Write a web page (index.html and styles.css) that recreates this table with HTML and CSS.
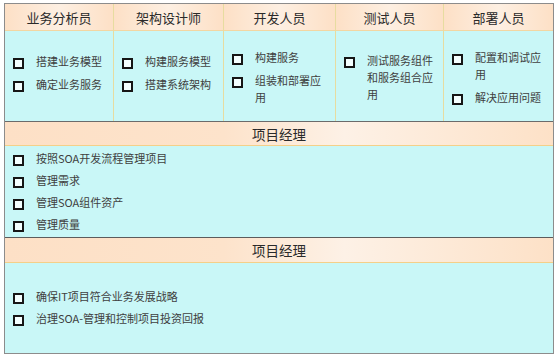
FILE: index.html
```html
<!DOCTYPE html>
<html lang="zh">
<head>
<meta charset="utf-8">
<link rel="stylesheet" href="styles.css">
</head>
<body>
<div class="frame">
  <div class="roles">
    <div class="col">
      <div class="col-head">业务分析员</div>
      <div class="col-body raised">
        <ul class="list">
          <li>搭建业务模型</li>
          <li>确定业务服务</li>
        </ul>
      </div>
    </div>
    <div class="col">
      <div class="col-head">架构设计师</div>
      <div class="col-body raised">
        <ul class="list">
          <li>构建服务模型</li>
          <li>搭建系统架构</li>
        </ul>
      </div>
    </div>
    <div class="col">
      <div class="col-head">开发人员</div>
      <div class="col-body">
        <ul class="list">
          <li>构建服务</li>
          <li>组装和部署应用</li>
        </ul>
      </div>
    </div>
    <div class="col">
      <div class="col-head">测试人员</div>
      <div class="col-body">
        <ul class="list">
          <li>测试服务组件和服务组合应用</li>
        </ul>
      </div>
    </div>
    <div class="col">
      <div class="col-head">部署人员</div>
      <div class="col-body">
        <ul class="list">
          <li>配置和调试应用</li>
          <li>解决应用问题</li>
        </ul>
      </div>
    </div>
  </div>
  <div class="section">
    <div class="sec-head">项目经理</div>
    <div class="sec-body sec-top">
      <ul class="list wide">
        <li>按照SOA开发流程管理项目</li>
        <li>管理需求</li>
        <li>管理SOA组件资产</li>
        <li>管理质量</li>
      </ul>
    </div>
  </div>
  <div class="section">
    <div class="sec-head tall">项目经理</div>
    <div class="sec-body sec-center">
      <ul class="list wide">
        <li>确保IT项目符合业务发展战略</li>
        <li>治理SOA-管理和控制项目投资回报</li>
      </ul>
    </div>
  </div>
</div>
</body>
</html>
```

FILE: styles.css
```css
* { box-sizing: border-box; }
html, body { margin: 0; padding: 0; background: #ffffff; }
body {
  font-family: "Noto Sans CJK SC", "Liberation Sans", sans-serif;
  color: #404040;
}
.frame {
  margin: 3px 0 0 4px;
  width: 550px;
  height: 351px;
  border: 1px solid #8c8c8c;
  display: flex;
  flex-direction: column;
  background: #c9f7f7;
}
.roles {
  display: grid;
  grid-template-columns: 108px 110px 112px 108px 1fr;
  height: 118px;
  border-bottom: 1px solid #6b6b6b;
}
.col {
  display: flex;
  flex-direction: column;
  border-left: 1px solid #e7dca0;
}
.col:first-child { border-left: none; }
.col-head {
  height: 27px;
  background: linear-gradient(90deg, #fde0c6 0%, #fdefe2 50%, #fde0c6 100%);
  border-bottom: 1px solid #f3d6a2;
  display: flex;
  align-items: center;
  justify-content: center;
  font-size: 13px;
  color: #2a2a2a;
}
.col-body {
  flex: 1;
  display: flex;
  align-items: center;
  padding: 2px 6px 0 8px;
}
.col-body.raised { padding-bottom: 6px; padding-top: 0; }
.list {
  list-style: none;
  margin: 0;
  padding: 0;
  display: flex;
  flex-direction: column;
  gap: 6px;
  font-size: 11px;
  line-height: 17px;
}
.list li {
  position: relative;
  padding-left: 23px;
}
.list li::before {
  content: "";
  position: absolute;
  left: 0;
  top: 5px;
  width: 7px;
  height: 7px;
  border: 2px solid #161616;
  background: #f4ffff;
}
.section {
  display: flex;
  flex-direction: column;
}
.section + .section { border-top: 1px solid #5c5c5c; flex: 1; }
.sec-head {
  height: 24px;
  background: linear-gradient(90deg, #fde0c6 0%, #fde3cb 40%, #fdf1e6 62%, #fde1c7 100%);
  border-bottom: 1px solid #f4d089;
  display: flex;
  align-items: center;
  justify-content: center;
  font-size: 13.5px;
  color: #2a2a2a;
}
.sec-head.tall { height: 25px; }
.sec-body { padding-left: 8px; }
.sec-top { height: 91px; padding-top: 4px; }
.list.wide { gap: 5px; }
.sec-center {
  flex: 1;
  display: flex;
  align-items: center;
  padding-bottom: 2px;
}
```
